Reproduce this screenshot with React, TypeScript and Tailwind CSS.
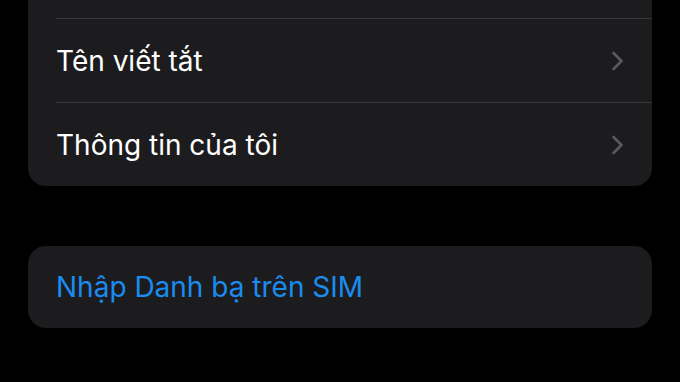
const rows = ["", "Tên viết tắt", "Thông tin của tôi"];

function Chevron() {
  return (
    <svg width="13" height="20" viewBox="0 0 13 20" fill="none">
      <path d="M2.5 2 10.5 10 2.5 18" stroke="#5a5a5e" strokeWidth="2.6" strokeLinecap="round" strokeLinejoin="round" />
    </svg>
  );
}

export default function App() {
  return (
    <main
      className="w-[680px] h-[382px] overflow-hidden bg-black px-[28px]"
      style={{ fontFamily: "Inter, 'Noto Sans', sans-serif" }}
    >
      <div className="mt-[-65px] rounded-[18px] bg-[#1c1c1e] overflow-hidden">
        {rows.map((label, i) => (
          <div key={i}>
            {i > 0 && <div className="ml-[28px] h-px bg-[#38383a]" />}
            <div className="h-[83px] flex items-center justify-between pl-[28px] pr-[28px]">
              <span className="text-[28px] text-white">{label}</span>
              {label && <Chevron />}
            </div>
          </div>
        ))}
      </div>
      <div className="mt-[60px] h-[82px] rounded-[18px] bg-[#1c1c1e] flex items-center pl-[28px]">
        <span className="text-[28px] text-[#1a8cf0]">Nhập Danh bạ trên SIM</span>
      </div>
    </main>
  );
}
